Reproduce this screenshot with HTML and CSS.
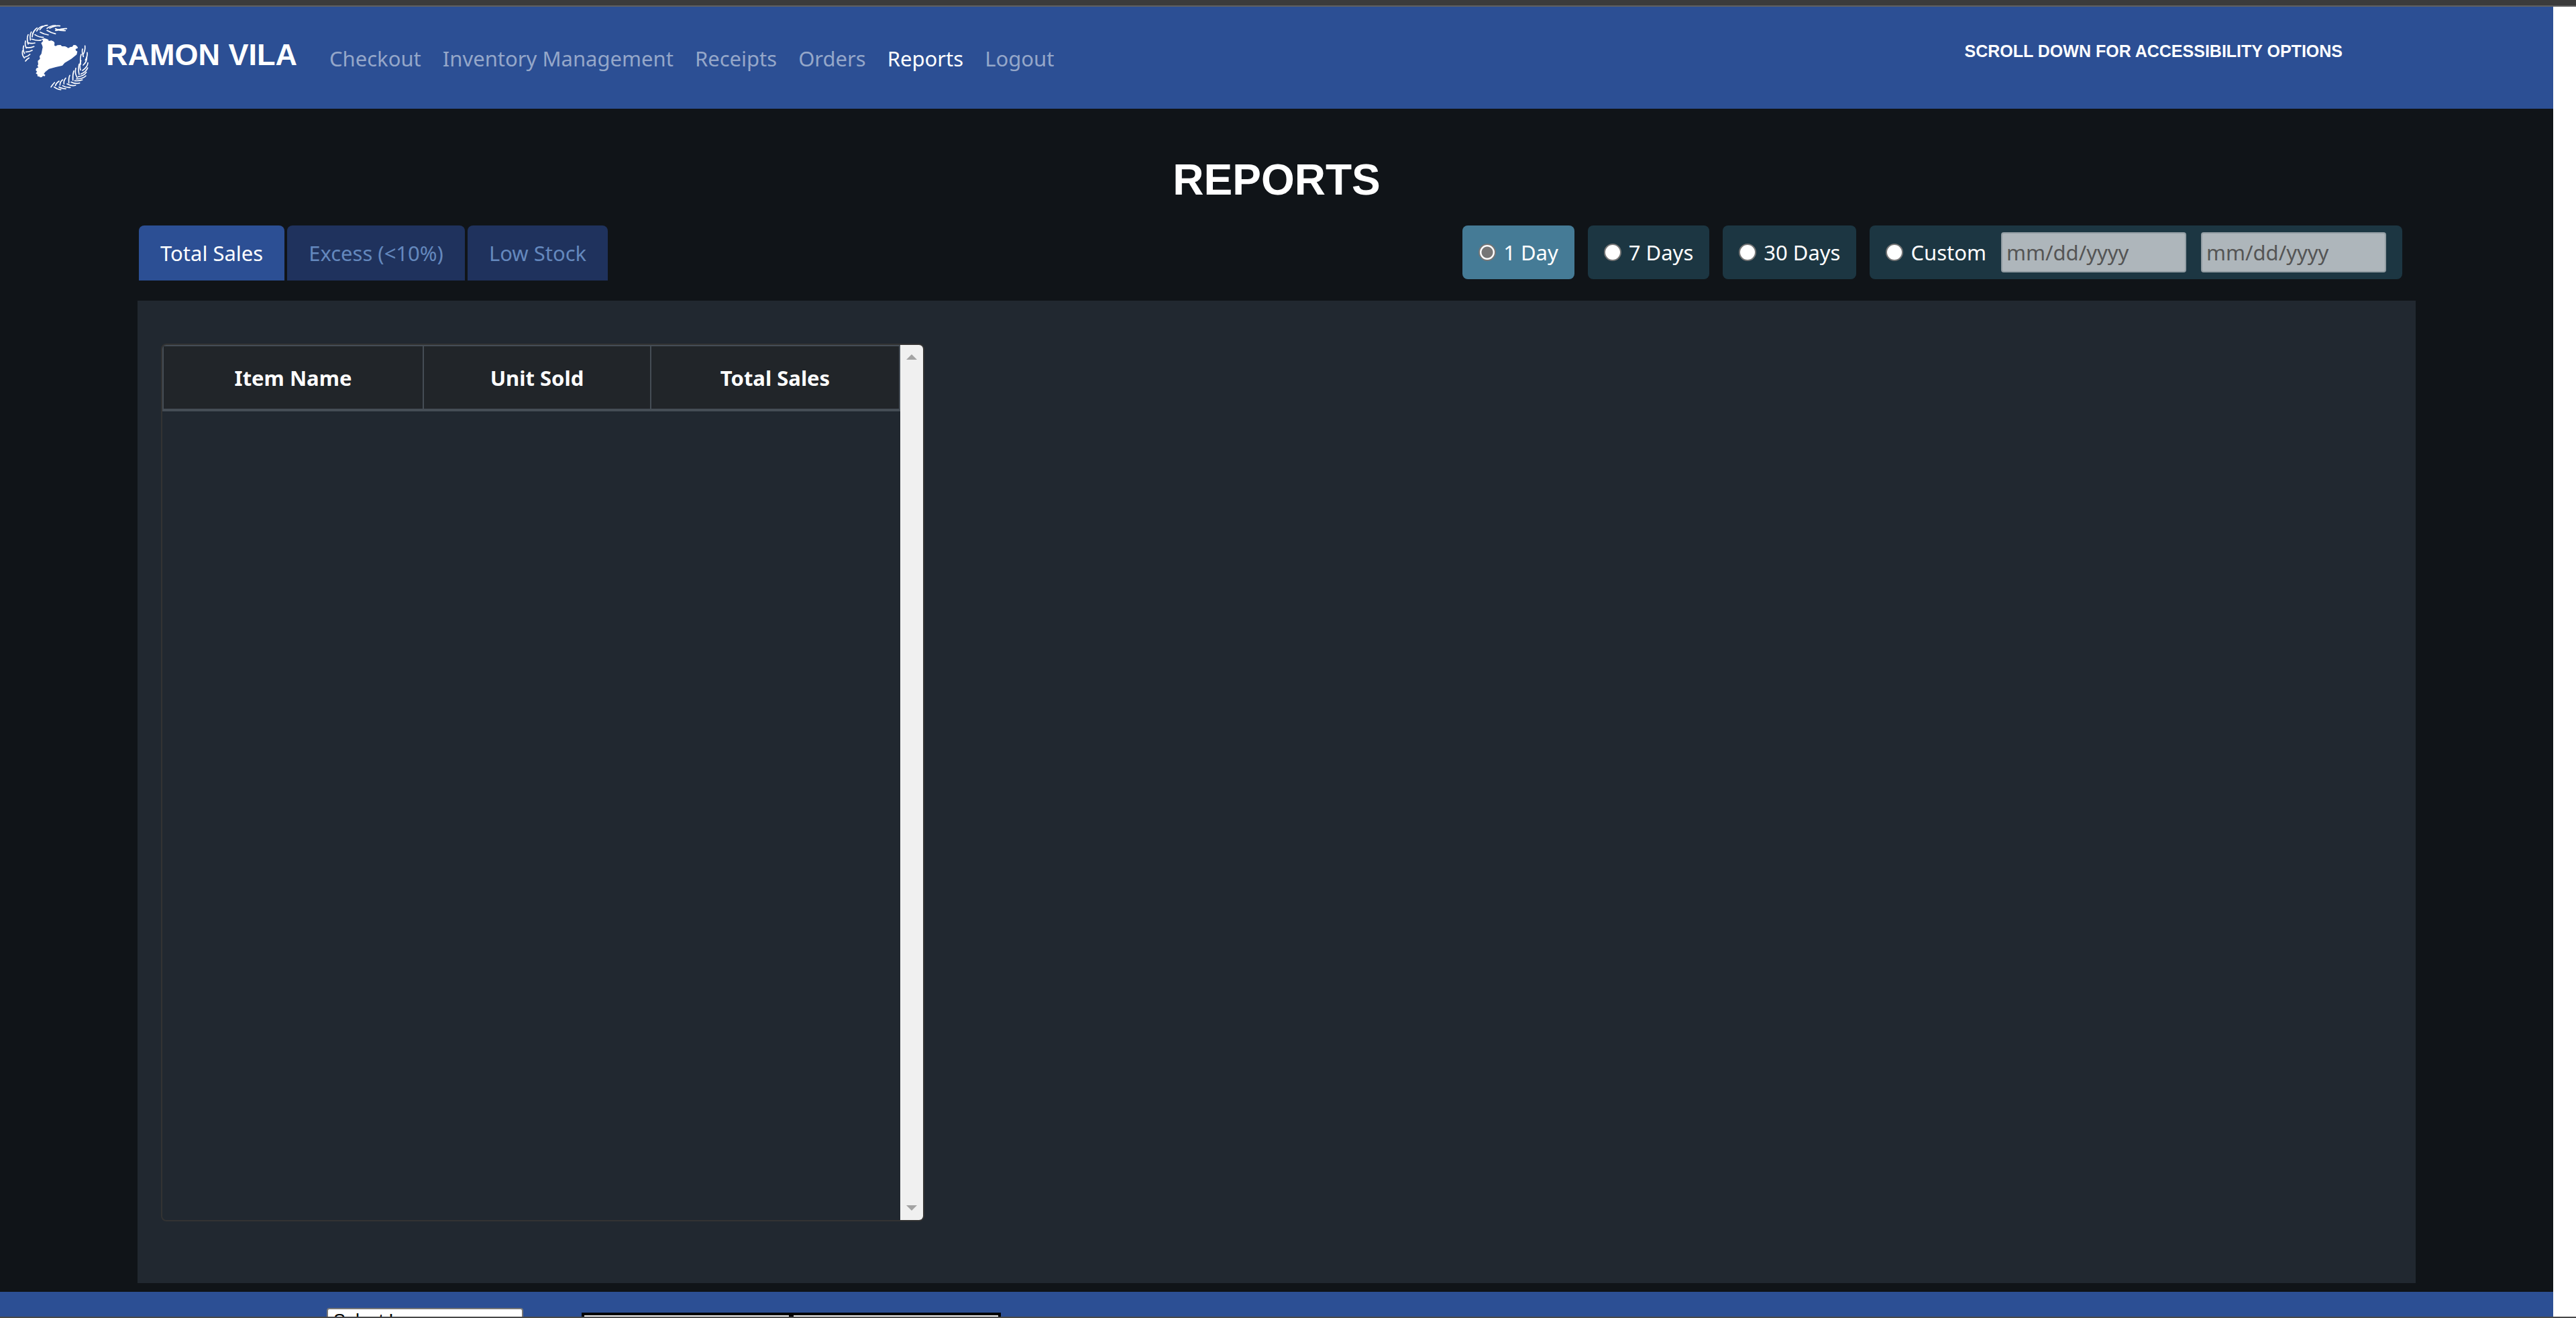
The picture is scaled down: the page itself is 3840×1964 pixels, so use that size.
FILE: index.html
```html
<!DOCTYPE html>
<html lang="en">
<head>
<meta charset="utf-8">
<title>Reports - Ramon Vila</title>
<link rel="stylesheet" href="styles.css">
</head>
<body>
<div class="viewport">
  <header class="navbar">
    <a class="brand" href="#">
      <svg class="brand-logo" viewBox="66 49 300 300" aria-hidden="true">
        <path class="map" d="M168 112l8 2 10 4 2 6 12-2 10 4 4 6-1 12 6 3 8-4 14-1 6 6 14 0 8 4 6 4 10-5 8-1 6-8 10 1 8 8 1 5-10 4 1 7 7 4-3 14-24 19-30 18-10 12-30 7-30 8-16 13-7 9 7 5-4 6-7-2-5 6-7 1-5-4-7-1-1-9-7-4 6-8-6-6 2-8 10-5-5-7 4-6-2-16 10-9-2-12 8-10 3-16 3-14-3-10-4-8 9-10-7-8z"/>
        <g class="leaf">
          <path d="M268 69q-22-2-44 8"/><path d="M256 73q-20-1-38 4"/><path d="M262 78q-22 2-44-9"/><path d="M238 57q-20-4-46 10"/><path d="M218 55q-20-1-38 13"/>
          <path d="M218 92q-18-3-38-15"/><path d="M186 97q-18-2-36-12"/><path d="M182 54q-20 0-34 20"/><path d="M160 58q-16 4-26 22"/><path d="M164 108q-20 0-38-12"/><path d="M136 66q-12 8-20 26"/>
          <path d="M154 120q-16 5-42-4"/><path d="M126 76q-10 10-12 30"/><path d="M126 133q-16 4-32-1"/><path d="M110 84q-8 14-4 36"/><path d="M122 149q-18 8-36 4"/><path d="M96 96q-8 16 0 42"/>
          <path d="M114 166q-14 8-28 7"/><path d="M84 124q-4 18 4 32"/><path d="M104 184q-10 10-22 12"/><path d="M76 146q-6 18 4 34"/><path d="M100 200q-10 6-16 14"/><path d="M71 168q-4 20 8 32"/>
        </g>
        <g class="leaf">
          <path d="M350 146q2 20-8 38"/><path d="M339 160q-4 14 4 34"/><path d="M360 176q2 16-8 34"/><path d="M333 184q-6 20-2 44"/><path d="M358 196q2 20-16 36"/><path d="M332 212q-8 20-2 42"/>
          <path d="M363 222q-2 20-24 34"/><path d="M324 228q-6 22 0 46"/><path d="M362 244q-6 18-30 28"/><path d="M309 246q-6 20 6 42"/><path d="M356 264q-10 16-36 20"/><path d="M300 258q-6 18-4 42"/>
          <path d="M354 280q-14 14-42 14"/><path d="M282 278q-6 12-4 34"/><path d="M338 298q-16 6-34 4"/><path d="M264 290q-10 10-8 26"/><path d="M326 312q-18 6-38-4"/><path d="M250 298q-12 8-12 24"/>
          <path d="M308 322q-16 6-38-6"/><path d="M234 304q-14 10-16 20"/><path d="M284 332q-18 2-34-8"/><path d="M214 310q-8 8-16 20"/><path d="M264 338q-20-2-30-8"/><path d="M242 342q-18-2-30-12"/>
        </g>
      </svg>
      <span class="brand-name">RAMON VILA</span>
    </a>
    <nav class="nav-links">
      <a href="#">Checkout</a>
      <a href="#">Inventory Management</a>
      <a href="#">Receipts</a>
      <a href="#">Orders</a>
      <a class="active" href="#">Reports</a>
      <a href="#">Logout</a>
    </nav>
    <p class="access-note">SCROLL DOWN FOR ACCESSIBILITY OPTIONS</p>
  </header>

  <main class="main">
    <h1 class="title">REPORTS</h1>
    <div class="toolbar">
      <div class="tabs">
        <button class="tab current" type="button">Total Sales</button>
        <button class="tab" type="button">Excess (&lt;10%)</button>
        <button class="tab" type="button">Low Stock</button>
      </div>
      <form class="ranges">
        <label class="range chosen"><input type="radio" name="range" checked>1 Day</label>
        <label class="range"><input type="radio" name="range">7 Days</label>
        <label class="range"><input type="radio" name="range">30 Days</label>
        <div class="range custom">
          <label class="range-label"><input type="radio" name="range">Custom</label>
          <input class="date" type="text" placeholder="mm/dd/yyyy" aria-label="Start date">
          <input class="date" type="text" placeholder="mm/dd/yyyy" aria-label="End date">
        </div>
      </form>
    </div>
    <section class="panel">
      <div class="table-box">
        <div class="table-area">
          <table class="report">
            <colgroup><col class="col-name"><col class="col-units"><col></colgroup>
            <thead><tr><th>Item Name</th><th>Unit Sold</th><th>Total Sales</th></tr></thead>
          </table>
        </div>
        <div class="scrollbar" aria-hidden="true">
          <svg viewBox="0 0 16 8"><path d="M8 0l8 8H0z"/></svg>
          <svg viewBox="0 0 16 8"><path d="M0 0h16L8 8z"/></svg>
        </div>
      </div>
    </section>
  </main>

  <footer class="footer">
    <select class="language" aria-label="Language"><option>Select Language</option></select>
    <div class="size-buttons"><button type="button" aria-label="Smaller text"></button><button type="button" aria-label="Larger text"></button></div>
  </footer>
</div>
</body>
</html>
```
FILE: styles.css
```css
* { box-sizing: border-box; }
body {
  margin: 0;
  height: 100vh;
  border-top: 8px solid #3b3b3b;
  border-bottom: 2px solid #484848;
  background: #fff;
  color: #fff;
  font: 31px/48px "Noto Sans", "Open Sans", sans-serif;
}
button, input, select { font: inherit; }
.viewport {
  height: 100%;
  display: flex;
  flex-direction: column;
  padding-right: 34px;
  border-top: 2px solid #606060;
}
.navbar {
  display: flex;
  align-items: center;
  height: 152px;
  flex: none;
  padding: 0 32px;
  background: #2c4f94;
}
.navbar a { color: #95a7c9; text-decoration: none; }
.navbar a.brand { display: flex; gap: 26px; align-items: center; color: #fff; }
.brand-logo { width: 100px; height: 100px; }
.map { fill: #fff; }
.leaf { fill: none; stroke: #fff; stroke-width: 5; stroke-linecap: round; }
.brand-name, .title, .access-note {
  font-family: "Liberation Sans Narrow", "Liberation Sans", sans-serif;
  font-weight: 700;
}
.brand-name { font-size: 45px; padding-bottom: 8px; }
.nav-links { display: flex; gap: 32px; padding: 2px 0 0 48px; }
.nav-links a.active { color: #fff; }
.access-note { margin: 0 282px 20px auto; font-size: 25px; line-height: 32px; }
.main {
  flex: 1;
  min-height: 0;
  display: flex;
  flex-direction: column;
  padding: 58px 205px 13px;
  background: #101418;
}
.title { margin: 0 0 20px; font-size: 64px; line-height: 96px; text-align: center; }
.toolbar { display: flex; justify-content: space-between; height: 112px; align-items: flex-start; padding: 0 20px 0 2px; }
.tabs { display: flex; gap: 4px; }
.tab {
  height: 82px;
  padding: 0 32px;
  border: 0;
  border-radius: 8px 8px 0 0;
  background: #1f325d;
  color: #6488bd;
}
.tab.current { background: #2c4f94; color: #fff; }
.ranges { display: flex; gap: 20px; }
.range, .range-label { display: flex; align-items: center; }
.range { height: 80px; padding: 0 24px; border-radius: 8px; background: #1c3642; }
.range.chosen { background: #457b96; }
.range.custom { gap: 22px; }
input[type="radio"] {
  appearance: none;
  width: 26px;
  height: 26px;
  margin: 0 11px 0 0;
  border: 2px solid #767676;
  border-radius: 50%;
  background: #fff;
}
input[type="radio"]:checked { background: radial-gradient(circle, #767676 0 8px, #fff 9px); }
.date {
  width: 276px;
  height: 60px;
  padding: 0 6px;
  border: 2px solid #929da3;
  border-radius: 4px;
  background: #aeb6bb;
}
.date::placeholder { color: #555; opacity: 1; }
.panel { flex: 1; min-height: 0; padding: 64px 35px 92px; background: #212830; }
.table-box {
  display: flex;
  width: 1138px;
  height: 100%;
  border: 2px solid #333;
  border-radius: 8px;
  overflow: hidden;
}
.table-area { flex: 1; }
.report { width: 100%; table-layout: fixed; border-collapse: collapse; }
.col-name { width: 388px; }
.col-units { width: 339px; }
.report th {
  height: 96px;
  padding: 0;
  border: 2px solid #454d55;
  border-bottom-width: 4px;
  background: #212529;
}
.scrollbar {
  width: 34px;
  display: flex;
  flex-direction: column;
  justify-content: space-between;
  align-items: center;
  padding: 14px 0;
  background: #f0f0f0;
}
.scrollbar svg { width: 16px; height: 8px; fill: #a3a3a3; }
.footer {
  flex: none;
  display: flex;
  align-items: flex-start;
  gap: 87px;
  height: 37px;
  overflow: hidden;
  padding: 24px 0 0 487px;
  background: #2c4f94;
}
.language {
  width: 293px;
  height: 38px;
  padding: 0 8px;
  border: 2px solid #767676;
  border-radius: 4px;
  background: #fff;
  color: #000;
  font: 27px/34px "Liberation Sans", sans-serif;
  appearance: none;
}
.size-buttons { display: flex; gap: 7px; margin-top: 7px; padding: 4px; background: #000; }
.size-buttons button { width: 305px; height: 64px; padding: 0; border: 0; background: #efefef; }
```
